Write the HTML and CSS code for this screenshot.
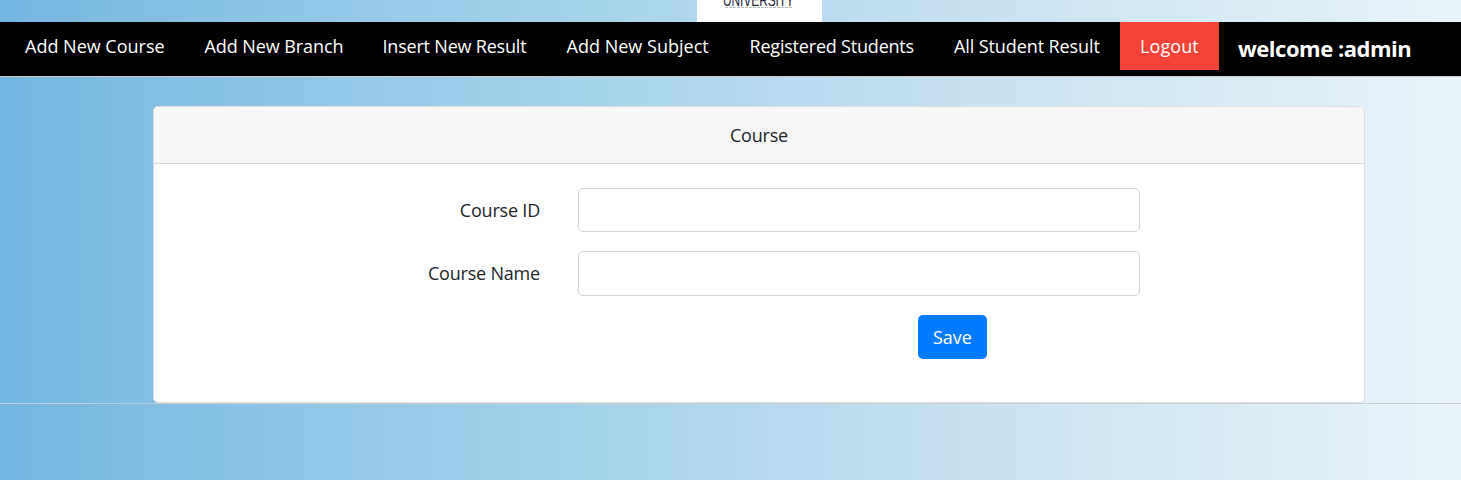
FILE: index.html
```html
<!DOCTYPE html>
<html lang="en">
<head>
<meta charset="utf-8">
<title>Course</title>
<link rel="stylesheet" href="styles.css">
</head>
<body>
<header class="banner">
  <div class="logo">
    <svg width="125" height="22" viewBox="0 0 125 22">
      <text class="logo-name" x="26" y="5.7" textLength="71" lengthAdjust="spacingAndGlyphs">UNIVERSITY</text>
      <path class="logo-tagline" d="M28 7.5H96"/>
    </svg>
  </div>
</header>
<nav class="navbar">
  <a class="nav-link course" href="#">Add New Course</a>
  <a class="nav-link branch" href="#">Add New Branch</a>
  <a class="nav-link result" href="#">Insert New Result</a>
  <a class="nav-link subject" href="#">Add New Subject</a>
  <a class="nav-link students" href="#">Registered Students</a>
  <a class="nav-link all-results" href="#">All Student Result</a>
  <a class="nav-link logout" href="#">Logout</a>
  <span class="welcome">welcome :admin</span>
</nav>
<main class="content">
  <form class="card">
    <div class="card-header">Course</div>
    <div class="card-body">
      <div class="form-row">
        <label for="course-id">Course ID</label>
        <input id="course-id" type="text">
      </div>
      <div class="form-row name-row">
        <label for="course-name">Course Name</label>
        <input id="course-name" type="text">
      </div>
      <button class="save" type="button">Save</button>
    </div>
  </form>
</main>
</body>
</html>
```
FILE: styles.css
```css
* { box-sizing: border-box; }
html { height: 100%; }
body {
  margin: 0;
  min-height: 100%;
  overflow: hidden;
  background: linear-gradient(90deg, #73b7e3 0, #7abae0 62px, #8dc5e6 280px, #a5d3ec 590px, #c2dff1 900px, #dcedf6 1290px, #e9f4fa 1461px);
  color: #212529;
  font: 18px/28px "Open Sans", "Noto Sans", sans-serif;
  letter-spacing: -0.2px;
}
.banner { height: 22px; padding-left: 697px; }
.logo { width: 125px; height: 22px; background: #fff; }
.logo svg { display: block; }
.logo-name { font: 16px "Liberation Sans", sans-serif; letter-spacing: 0; fill: #25233a; }
.logo-tagline { stroke: #bbb; stroke-width: 1; stroke-dasharray: 3 1; }
.navbar {
  display: flex;
  align-items: flex-start;
  height: 55px;
  padding-left: 5px;
  background: #000;
  border-bottom: 1px solid #ccc;
}
.nav-link {
  flex: none;
  height: 48px;
  padding: 10px 0 10px 20px;
  color: #fff;
  text-decoration: none;
  white-space: nowrap;
}
.course { width: 179.5px; letter-spacing: 0; }
.branch { width: 178px; letter-spacing: -0.08px; }
.result { width: 184px; }
.subject { width: 183px; letter-spacing: 0.02px; }
.students { width: 204.5px; }
.all-results { width: 186px; letter-spacing: -0.1px; }
.logout { width: 99px; background: #f44336; letter-spacing: 0.1px; }
.welcome {
  padding: 10px 0 0 19px;
  color: #fff;
  font-size: 22px;
  line-height: 33px;
  font-weight: 700;
  letter-spacing: -0.48px;
  white-space: nowrap;
}
.content {
  height: 327px;
  padding: 29px 96px 0 153px;
  border-bottom: 1px solid #c5cdd1;
}
.card {
  height: 297px;
  overflow: hidden;
  background: #fff;
  border: 1px solid #dcdfe0;
  border-radius: 5px;
}
.card-header {
  height: 57px;
  padding-top: 14px;
  background: #f7f7f7;
  border-bottom: 1px solid #d9d9d9;
  text-align: center;
}
.card-body { padding-top: 24px; }
.form-row {
  display: grid;
  grid-template-columns: 386px 562px;
  column-gap: 38px;
  height: 44px;
  margin-bottom: 19px;
}
.form-row label { padding-top: 8px; text-align: right; }
.form-row input {
  width: 562px;
  height: 100%;
  border: 1px solid #ced4da;
  border-radius: 5px;
  background: #fff;
}
.name-row { height: 45px; }
.save {
  display: block;
  width: 69px;
  height: 44px;
  margin-left: 764px;
  padding: 0;
  border: 0;
  border-radius: 5px;
  background: #007bff;
  color: #fff;
  font: inherit;
  letter-spacing: 0;
}
```
